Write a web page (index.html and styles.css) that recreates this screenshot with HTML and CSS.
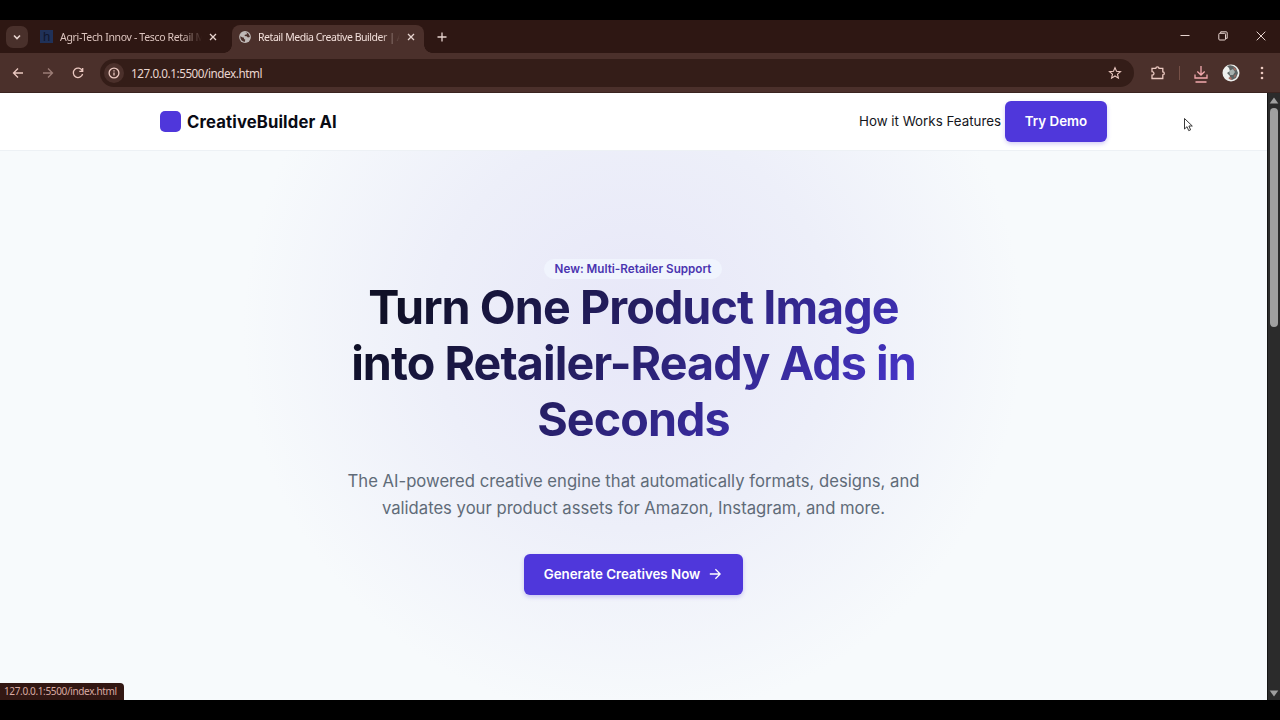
FILE: index.html
```html
<!DOCTYPE html>
<html lang="en">
<head>
<meta charset="utf-8">
<title>Retail Media Creative Builder</title>
<link rel="stylesheet" href="styles.css">
</head>
<body>
<div class="screen">
  <div class="tabstrip">
    <button class="tab-search" aria-label="Search tabs"><svg width="10" height="10" viewBox="0 0 10 10"><path d="M2 3.500l3 3 3-3"/></svg></button>
    <div class="tab">
      <span class="favicon-h">h</span>
      <span class="tab-title">Agri-Tech Innov - Tesco Retail M</span>
      <svg class="close" width="8" height="8" viewBox="0 0 8 8"><path d="M1 1l6 6M7 1L1 7"/></svg>
    </div>
    <div class="tab active">
      <svg class="globe" width="12" height="12" viewBox="0 0 12 12"><circle cx="6" cy="6" r="5.900" fill="#c0b9b7"/><path d="M1.200 5.300l2.600 1.100 1 .2.3 1.500 1.200.6-.6 2.200C3 10.600 1.300 8.800 1.200 5.300zM5.200 1.200l1.900.2.900.9-.4 1.300-1.700.2-.3 1.300 2.100.2 1.200 1.300 2-.5C10.500 3 8.400 1 5.200 1.200z" fill="#4b302b"/></svg>
      <span class="tab-title">Retail Media Creative Builder | A</span>
      <svg class="close" width="8" height="8" viewBox="0 0 8 8"><path d="M1 1l6 6M7 1L1 7"/></svg>
    </div>
    <svg class="plus" width="10" height="10" viewBox="0 0 10 10"><path d="M5 .5v9M.5 5h9"/></svg>
    <div class="window-buttons">
      <svg width="10" height="10" viewBox="0 0 10 10"><path d="M.5 4.500h9"/></svg>
      <svg width="10" height="10" viewBox="0 0 10 10"><rect x=".8" y="2.300" width="6.700" height="6.700" rx="1"/><path d="M2.700 2V.8h5.500q1 0 1 1v5.500H7.800"/></svg>
      <svg width="10" height="10" viewBox="0 0 10 10"><path d="M.7.7l8.600 8.600M9.300.7L.7 9.300"/></svg>
    </div>
  </div>
  <div class="toolbar">
    <svg class="nav" width="12" height="12" viewBox="0 0 12 12"><path d="M11 6H1.500M6 1.500L1.500 6 6 10.500"/></svg>
    <svg class="nav dim" width="12" height="12" viewBox="0 0 12 12"><path d="M1 6h9.500M6 1.500L10.500 6 6 10.500"/></svg>
    <svg class="nav" width="12" height="12" viewBox="0 0 12 12"><path d="M10.300 3.800A4.700 4.700 0 1 0 10.600 7M10.700 1v3.400H7.300"/></svg>
    <div class="address">
      <span class="info"><svg width="12" height="12" viewBox="0 0 12 12"><circle cx="6" cy="6" r="4.900"/><path d="M6 5.500v3M6 3.200v1.200"/></svg></span>
      <span class="url">127.0.0.1:5500/index.html</span>
      <svg class="star" width="14" height="14" viewBox="0 0 14 14"><path d="M7 1.600l1.500 3.700 4 .3-3 2.600.9 3.900L7 10 3.600 12.100l.9-3.900-3-2.600 4-.3z"/></svg>
    </div>
    <svg class="puzzle" width="16" height="16" viewBox="0 0 16 16"><path d="M2 3.300h3.800q.1-1.500 1.600-1.500t1.600 1.500h3.800v3.600q1.500 0 1.500 1.500t-1.500 1.500v3.600H2v-3.300q2-.1 2-1.800T2 6.600z"/></svg>
    <span class="divider"></span>
    <svg class="download" width="16" height="20" viewBox="0 0 16 20"><path d="M8 2v9M4.300 7.500L8 11l3.700-3.500M2 10.500V14h12v-3.500M2.500 18h11"/></svg>
    <svg class="avatar" width="18" height="18" viewBox="0 0 18 18"><circle cx="9" cy="9" r="8.500" fill="#eef0ee"/><path d="M5 2q5-2 9 2l2 5-2 5-4 2-3-1 1-3-3-3 3-2-1-3z" fill="#5d6464"/><path d="M7 7l4-2 2 3-2 3-3 0z" fill="#a8b2b0"/><path d="M11 3l3 2-1 2zM12 12l2-2-1 4zM6 14l3-1 1 3z" fill="#b66e62"/></svg>
    <svg class="menu" width="4" height="14" viewBox="0 0 4 14"><circle cx="2" cy="2" r="1.300"/><circle cx="2" cy="7" r="1.300"/><circle cx="2" cy="12" r="1.300"/></svg>
  </div>
  <div class="viewport">
    <div class="page">
      <header class="header">
        <div class="brand"><span class="logo"></span><span class="brand-name">CreativeBuilder AI</span></div>
        <nav class="links"><span class="link">How it Works Features</span><a class="btn demo">Try Demo</a></nav>
      </header>
      <main class="hero">
        <span class="badge">New: Multi-Retailer Support</span>
        <h1>Turn One Product Image<br>into Retailer-Ready Ads in<br>Seconds</h1>
        <p>The AI-powered creative engine that automatically formats, designs, and<br>validates your product assets for Amazon, Instagram, and more.</p>
        <a class="btn generate"><span>Generate Creatives Now</span><svg width="12" height="12" viewBox="0 0 12 12"><path d="M.8 6h10.400M6.400 1.200L11.200 6l-4.800 4.800"/></svg></a>
      </main>
      <div class="status">127.0.0.1:5500/index.html</div>
    </div>
    <div class="scrollbar">
      <svg width="10" height="7" viewBox="0 0 10 7"><path d="M5 .5L9.300 6.500H.7z"/></svg>
      <span class="thumb"></span>
      <svg class="down" width="10" height="7" viewBox="0 0 10 7"><path d="M5 6.500L9.300.5H.7z"/></svg>
    </div>
  </div>
  <svg class="cursor" width="10" height="15" viewBox="0 0 10 15"><path d="M1.500 1.500v10.500l2.500-2.300 1.700 3.900 1.900-.8-1.700-3.800h3.400z"/></svg>
</div>
</body>
</html>
```

FILE: styles.css
```css
* { box-sizing: border-box; }
body { margin: 0; background: #000; font-family: Inter, sans-serif; }
svg { display: block; flex: none; fill: none; }
.screen { position: relative; width: 1280px; height: 720px; padding: 20px 0; display: flex; flex-direction: column; overflow: hidden; background: #000; }

.tabstrip { height: 33px; flex: none; display: flex; background: #2e1713; font-family: "Noto Sans", sans-serif; font-size: 10.5px; letter-spacing: -.33px; color: #ddc5bf; padding-left: 6px; }
.tabstrip svg { stroke: #e8d5d0; }
.tab-search { width: 22px; height: 22px; margin: 6px 12px 0 0; padding: 6px; border: 0; border-radius: 7px; background: #49302b; }
.tab-search svg { stroke-width: 1.6; }
.tab { display: flex; align-items: center; width: 192px; height: 33px; }
.favicon-h { flex: none; width: 13px; height: 13px; background: #203158; color: #10162c; font: 13px/13px "Liberation Sans", sans-serif; text-align: center; }
.tab-title { flex: none; width: 142px; margin: 0 7px 0 7px; white-space: nowrap; line-height: 18px; -webkit-mask-image: linear-gradient(90deg, #000 122px, transparent 142px); mask-image: linear-gradient(90deg, #000 122px, transparent 142px); }
.close { stroke-width: 1.3; }
.tab.active { position: relative; height: 28px; margin-top: 5px; padding: 0 0 5px 7px; border-radius: 8px 8px 0 0; background: #4b302b; color: #f2dfda; letter-spacing: -.45px; }
.tab.active::before, .tab.active::after { content: ""; position: absolute; bottom: 0; width: 8px; height: 8px; }
.tab.active::before { left: -8px; background: radial-gradient(circle at 0 0, transparent 7.500px, #4b302b 8px); }
.tab.active::after { right: -8px; background: radial-gradient(circle at 100% 0, transparent 7.500px, #4b302b 8px); }
.tabstrip .globe { stroke: none; }
.plus { margin: 12px 0 0 13px; stroke-width: 1.3; }
.window-buttons { display: flex; gap: 28px; margin: 11px 14px 0 auto; }

.toolbar { height: 40px; flex: none; display: flex; align-items: center; padding-left: 12px; background: #4b302b; border-bottom: 1px solid #3b2420; }
.toolbar svg { stroke: #ecc9c1; stroke-width: 1.3; }
.nav { margin-right: 18px; }
.toolbar .dim { opacity: .5; }
.address { display: flex; align-items: center; width: 1034px; height: 28px; margin-left: -2px; padding: 0 12px 0 4px; border-radius: 14px; background: #341d18; }
.info { width: 20px; height: 20px; padding: 4px; border-radius: 50%; background: #4b302b; }
.url { margin-left: 7px; font: 11.7px/18px "Noto Sans", sans-serif; letter-spacing: -.45px; color: #ead6d0; }
.toolbar .star { margin-left: auto; stroke-width: 1.100; }
.puzzle { margin-left: 16px; }
.divider { width: 1px; height: 14px; margin: 0 13px 0 13px; background: #765047; }
.toolbar .download { stroke: #f3a9ae; margin-top: 3px; }
.toolbar .avatar { stroke: none; margin-left: 13px; }
.toolbar .menu { margin-left: 20px; fill: #ecc9c1; stroke: none; }

.viewport { flex: 1; min-height: 0; display: flex; }
.page { position: relative; width: 1267px; height: 607px; overflow: hidden; background: #f7fafc; }
.header { height: 58px; display: flex; justify-content: space-between; align-items: center; padding: 0 160px; border-bottom: 1px solid #edf1f5; background: #fff; }
.brand { display: flex; align-items: center; gap: 6px; }
.logo { width: 21px; height: 21px; border-radius: 5px; background: #4f37db; }
.brand-name { font-size: 16.67px; font-weight: 700; letter-spacing: .14px; color: #0a0b14; white-space: nowrap; }
.links { display: flex; align-items: center; gap: 4px; font-size: 13.33px; color: #15161c; white-space: nowrap; }
.link { padding-bottom: 1px; }
.btn { display: flex; align-items: center; justify-content: center; height: 41px; padding-bottom: 1px; border-radius: 6px; background: #4f37db; color: #fff; font-size: 13.33px; font-weight: 600; box-shadow: 0 2px 4px rgba(79,55,219,.25); white-space: nowrap; }
.demo { width: 102px; }
.hero { display: flex; flex-direction: column; align-items: center; height: 549px; padding-top: 108px; background: radial-gradient(circle at 633px 178px, #e7e7f8 0, #edeff9 200px, #f7fafc 390px); }
.badge { display: flex; align-items: center; justify-content: center; width: 178px; height: 20px; margin-right: 1px; border-radius: 10px; background: #f0f4fd; font-size: 11.67px; font-weight: 600; color: #4a35b0; white-space: nowrap; }
h1 { width: 572px; margin: 0; text-align: center; font-size: 46.67px; line-height: 56px; font-weight: 700; letter-spacing: -.93px; white-space: nowrap; color: transparent; background: linear-gradient(135deg, #0f1027 10%, #261f66 45%, #4634c8 90%); -webkit-background-clip: text; background-clip: text; }
p { margin: 21px 0 0; text-align: center; font-size: 16.67px; line-height: 27px; color: #606b78; white-space: nowrap; }
.generate { width: 219px; gap: 9px; margin-top: 32px; padding-right: 2px; }
.generate svg { stroke: #fff; stroke-width: 1.300; }
.status { position: absolute; left: 0; bottom: 0; width: 124px; height: 17px; padding-left: 4px; border-radius: 0 4px 0 0; background: #321713; color: #d9aaa2; font: 10px/17px "Noto Sans", sans-serif; letter-spacing: -.36px; white-space: nowrap; }
.scrollbar { width: 13px; display: flex; flex-direction: column; align-items: center; padding: 4px 0 3px 0; background: #2b2b2b; border-left: 1px solid #151515; }
.scrollbar svg { fill: #a0a0a0; }
.thumb { width: 8px; height: 219px; margin-top: 4px; border-radius: 4px; background: #a0a0a0; }
.down { margin-top: auto; }
.cursor { position: absolute; left: 1183px; top: 117px; fill: #fff; stroke: #222; stroke-width: .9; }
```
